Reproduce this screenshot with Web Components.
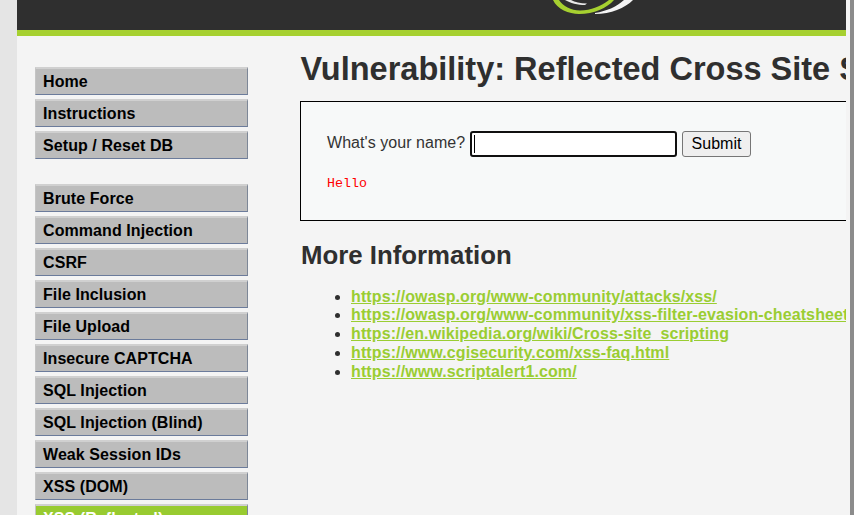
<!DOCTYPE html>
<html>
<head>
<meta charset="utf-8">
<title>Vulnerability: Reflected Cross Site Scripting (XSS)</title>
<style>
html, body { margin: 0; height: 515px; overflow: hidden; background: #e5e5e5; }
body { font-family: "Liberation Sans", Arial, sans-serif; color: #2f2f2f; }
</style>
</head>
<body>
<dvwa-page>
  <dvwa-header slot="header"></dvwa-header>
  <dvwa-menu slot="menu">
    <dvwa-link>Home</dvwa-link>
    <dvwa-link>Instructions</dvwa-link>
    <dvwa-link>Setup / Reset DB</dvwa-link>
  </dvwa-menu>
  <dvwa-menu slot="menu">
    <dvwa-link>Brute Force</dvwa-link>
    <dvwa-link>Command Injection</dvwa-link>
    <dvwa-link>CSRF</dvwa-link>
    <dvwa-link>File Inclusion</dvwa-link>
    <dvwa-link>File Upload</dvwa-link>
    <dvwa-link>Insecure CAPTCHA</dvwa-link>
    <dvwa-link>SQL Injection</dvwa-link>
    <dvwa-link>SQL Injection (Blind)</dvwa-link>
    <dvwa-link>Weak Session IDs</dvwa-link>
    <dvwa-link>XSS (DOM)</dvwa-link>
    <dvwa-link selected>XSS (Reflected)</dvwa-link>
  </dvwa-menu>
  <h1 slot="title">Vulnerability: Reflected Cross Site Scripting (XSS)</h1>
  <dvwa-form slot="form"></dvwa-form>
  <dvwa-info slot="info">
    <a>https://owasp.org/www-community/attacks/xss/</a>
    <a>https://owasp.org/www-community/xss-filter-evasion-cheatsheet</a>
    <a>https://en.wikipedia.org/wiki/Cross-site_scripting</a>
    <a>https://www.cgisecurity.com/xss-faq.html</a>
    <a>https://www.scriptalert1.com/</a>
  </dvwa-info>
</dvwa-page>

<script>
// outer frame: grey margins, header on top, menu and content side by side
class DvwaPage extends HTMLElement {
  constructor() {
    super();
    this.attachShadow({ mode: 'open' });
    this.shadowRoot.innerHTML = `
    <style>
      :host { display: flex; height: 515px; }
      .left { width: 17px; flex: none; }
      .container { width: 829px; flex: none; background: #f4f4f4; overflow: hidden; }
      .right { width: 4px; flex: none; background: #f4f4f4; }
      .scrollbar { flex: 1; background: #8c8c8c; }
      .body { display: flex; }
      .side { width: 283px; flex: none; padding-top: 31px; box-sizing: border-box; }
      main { flex: none; width: 546px; overflow: hidden; }
      ::slotted(h1) {
        margin: 15px 0 13px; font-size: 32.5px; line-height: 37px; font-weight: bold;
        color: #2f2f2f; white-space: nowrap; padding-left: 0.4px;
      }
    </style>
    <div class="left"></div>
    <div class="container">
      <slot name="header"></slot>
      <div class="body">
        <div class="side"><slot name="menu"></slot></div>
        <main>
          <slot name="title"></slot>
          <slot name="form"></slot>
          <slot name="info"></slot>
        </main>
      </div>
    </div>
    <div class="right"></div>
    <div class="scrollbar"></div>`;
  }
}

// dark bar with the bottom of the logo still visible
class DvwaHeader extends HTMLElement {
  constructor() {
    super();
    this.attachShadow({ mode: 'open' });
    this.shadowRoot.innerHTML = `
    <style>
      :host { display: block; height: 30px; background: #2f2f2f; border-bottom: 6px solid #a6d030; overflow: hidden; }
      svg { display: block; margin-left: 530px; }
    </style>
    <svg width="110" height="20" viewBox="0 0 110 20">
      <path d="M6 0C10 9 22 14 32 14C47 14 60 8 67 0L62 0C54 6 44 10.500 33 10.500C24 10.500 16 6 12 0Z" fill="#a6d030"/>
      <path d="M18 0C23 3 31 5 38 5L40 3.500C33 3.500 28 2 24 0Z" fill="#e8e8e8"/>
      <path d="M48 14C64 14 78 8 86 0L77 0C69 7 60 11 48 13Z" fill="#f4f4f4"/>
    </svg>`;
  }
}

class DvwaMenu extends HTMLElement {
  constructor() {
    super();
    this.attachShadow({ mode: 'open' });
    this.shadowRoot.innerHTML = `
    <style>
      :host { display: flex; flex-direction: column; gap: 4px; margin: 0 0 25px 18px; width: 213px; }
    </style>
    <slot></slot>`;
  }
}

class DvwaLink extends HTMLElement {
  constructor() {
    super();
    this.attachShadow({ mode: 'open' });
    this.shadowRoot.innerHTML = `
    <style>
      :host {
        display: block; height: 28px; box-sizing: border-box; padding-left: 7px;
        background: #bcbcbc; color: #000; font-size: 16px; font-weight: bold; line-height: 25px;
        letter-spacing: 0.08px;
        border-top: 2px solid #d0d0d0; border-bottom: 1px solid #6b7b9b;
        border-right: 1px solid #7d8797; border-left: 1px solid #c4c4c4; white-space: nowrap;
      }
      :host([selected]) { background: #98cb30; color: #fff; }
    </style>
    <slot></slot>`;
  }
}

// the bordered box with the name form
class DvwaForm extends HTMLElement {
  constructor() {
    super();
    this.attachShadow({ mode: 'open' });
    this.shadowRoot.innerHTML = `
    <style>
      :host {
        display: block; box-sizing: border-box; width: 600px; height: 120px;
        border: 1px solid #000; background: #f7f9f9; padding: 29px 0 0 26px;
      }
      form { display: flex; align-items: center; gap: 5px; font-size: 16px; color: #333; }
      .label { width: 138px; flex: none; padding-bottom: 2px; letter-spacing: 0.05px; white-space: nowrap; }
      .field { position: relative; display: block; width: 207px; height: 26px; flex: none; }
      input {
        box-sizing: border-box; width: 207px; height: 26px; margin: 0; padding: 0;
        border: 2px solid #101010; border-radius: 3px; background: #fff; outline: none; display: block;
      }
      .caret { position: absolute; left: 4px; top: 4px; width: 1px; height: 18px; background: #000; }
      button {
        box-sizing: border-box; width: 69px; height: 26px; margin: 0; padding: 0;
        font: 16px "Liberation Sans", Arial, sans-serif; color: #000;
        background: #efefef; border: 1px solid #767676; border-radius: 3px;
      }
      pre { margin: 18px 0 0; font: 13.33px/17px "Liberation Mono", monospace; color: #f00; }
    </style>
    <form onsubmit="return false">
      <span class="label">What's your name?</span>
      <span class="field"><input type="text" name="name"><span class="caret"></span></span>
      <button type="button">Submit</button>
    </form>
    <pre>Hello</pre>`;
  }
}

class DvwaInfo extends HTMLElement {
  constructor() {
    super();
    this.attachShadow({ mode: 'open' });
    this.shadowRoot.innerHTML = `
    <style>
      :host { display: block; white-space: nowrap; }
      h2 { margin: 18px 0 0; padding-left: 1px; font-size: 25.8px; line-height: 32px; font-weight: bold; color: #2f2f2f; }
      ul { margin: 16.6px 0 0; padding: 0 0 0 51px; font-size: 16px; line-height: 18.750px; }
      li { color: #2f2f2f; }
      a { color: #9acd32; font-weight: bold; text-decoration: underline; letter-spacing: 0.11px; }
    </style>
    <h2>More Information</h2>
    <ul></ul>`;
    // light dom anchors are the data, rendered as list rows
    const list = this.shadowRoot.querySelector('ul');
    this.querySelectorAll('a').forEach(src => {
      const li = document.createElement('li');
      const a = document.createElement('a');
      a.textContent = src.textContent;
      a.href = '#';
      li.appendChild(a);
      list.appendChild(li);
    });
  }
}

customElements.define('dvwa-link', DvwaLink);
customElements.define('dvwa-menu', DvwaMenu);
customElements.define('dvwa-header', DvwaHeader);
customElements.define('dvwa-form', DvwaForm);
customElements.define('dvwa-page', DvwaPage);
customElements.define('dvwa-info', DvwaInfo);
</script>
</body>
</html>
